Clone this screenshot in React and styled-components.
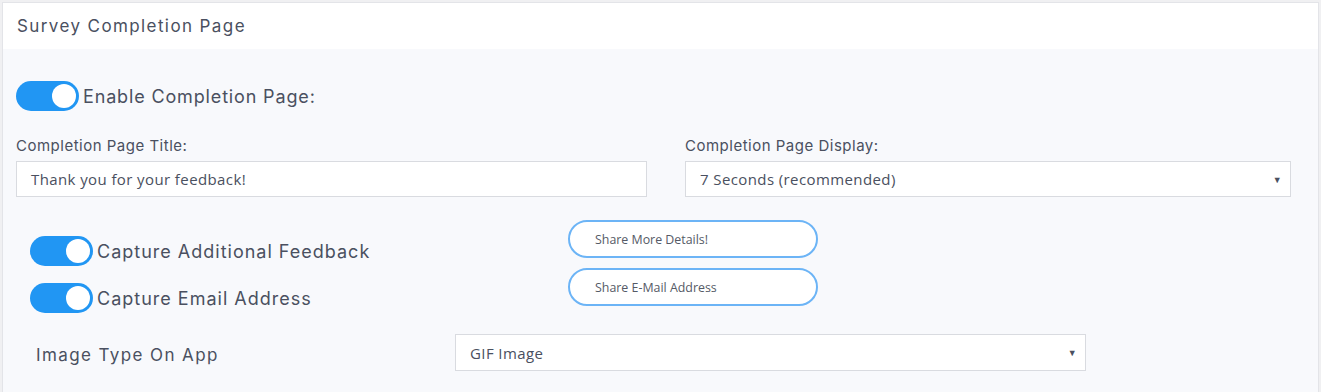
import styled, { createGlobalStyle } from "styled-components";

const GlobalStyle = createGlobalStyle`
  body {
    margin: 0;
    background: #f0f0f2;
    font-family: "Open Sans", "Liberation Sans", sans-serif;
  }
`;

const Card = styled.div`
  margin: 2px 2px 0 2px;
  width: 1315px;
  border: 1px solid #e3e4e8;
  background: #f8f9fc;
  height: 400px;
`;

const Header = styled.div`
  background: #ffffff;
  height: 46px;
  padding-left: 14px;
  display: flex;
  align-items: center;
  font-family: "Inter", sans-serif;
  font-size: 17px;
  letter-spacing: 1.4px;
  color: #4a5060;
`;

const Body = styled.div`
  padding: 32px 27px 0 13px;
`;

const ToggleRow = styled.label`
  display: flex;
  align-items: center;
  gap: 4px;
  font-family: "Inter", sans-serif;
  font-size: 18px;
  letter-spacing: ${(p) => p.spacing || 0.9}px;
  color: #4a5060;
  margin-left: ${(p) => p.indent || 0}px;
`;

const Switch = styled.span`
  width: 63px;
  height: 30px;
  border-radius: 15px;
  background: #2196f3;
  display: flex;
  align-items: center;
  justify-content: flex-end;
  padding-right: 3px;
  box-sizing: border-box;
  flex-shrink: 0;
  &::after {
    content: "";
    width: 24px;
    height: 24px;
    border-radius: 50%;
    background: #fff;
  }
`;

const Grid = styled.div`
  display: grid;
  grid-template-columns: 631px 606px;
  column-gap: 38px;
  margin-top: 25px;
`;

const Field = styled.div`
  display: flex;
  flex-direction: column;
`;

const Label = styled.div`
  font-family: "Inter", sans-serif;
  font-size: 15px;
  letter-spacing: 0.5px;
  color: #4a5060;
  margin-bottom: 8px;
  height: 17px;
`;

const Box = styled.div`
  height: ${(p) => p.h || 36}px;
  border: 1px solid #d9dbe0;
  background: #fff;
  display: flex;
  align-items: center;
  justify-content: space-between;
  padding: 0 8px 0 14px;
  font-size: 15px;
  letter-spacing: 0.4px;
  color: #4a5060;
  box-sizing: border-box;
  width: ${(p) => p.w || "auto"};
`;

const Arrow = styled.span`
  font-size: 9px;
  color: #4a5060;
`;

const CaptureSection = styled.div`
  display: flex;
  margin-top: 23px;
`;

const ToggleCol = styled.div`
  display: flex;
  flex-direction: column;
  gap: 17px;
  padding-top: 16px;
  width: 552px;
`;

const PillCol = styled.div`
  display: flex;
  flex-direction: column;
  gap: 10px;
`;

const Pill = styled.div`
  width: 250px;
  height: 38px;
  border: 2px solid #6cb4f6;
  border-radius: 19px;
  background: #fff;
  box-sizing: border-box;
  display: flex;
  align-items: center;
  padding-left: 25px;
  font-family: "Open Sans", sans-serif;
  font-size: 12.4px;
  color: #555a66;
`;

const ImageRow = styled.div`
  display: flex;
  align-items: center;
  margin-top: 21px;
  padding-left: 20px;
`;

const RowLabel = styled.div`
  width: 419px;
  padding-top: 5px;
  font-family: "Inter", sans-serif;
  font-size: 17px;
  letter-spacing: 1.4px;
  color: #4a5060;
`;

export default function App() {
  return (
    <>
      <GlobalStyle />
      <Card>
        <Header>Survey Completion Page</Header>
        <Body>
          <ToggleRow spacing={0.85}>
            <Switch />
            Enable Completion Page:
          </ToggleRow>
          <Grid>
            <Field>
              <Label>Completion Page Title:</Label>
              <Box>Thank you for your feedback!</Box>
            </Field>
            <Field>
              <Label>Completion Page Display:</Label>
              <Box>
                7 Seconds (recommended)
                <Arrow>▼</Arrow>
              </Box>
            </Field>
          </Grid>
          <CaptureSection>
            <ToggleCol>
              <ToggleRow indent={14} spacing={1}>
                <Switch />
                Capture Additional Feedback
              </ToggleRow>
              <ToggleRow indent={14} spacing={1}>
                <Switch />
                Capture Email Address
              </ToggleRow>
            </ToggleCol>
            <PillCol>
              <Pill>Share More Details!</Pill>
              <Pill>Share E-Mail Address</Pill>
            </PillCol>
          </CaptureSection>
          <ImageRow>
            <RowLabel>Image Type On App</RowLabel>
            <Box w="631px" h={37}>
              GIF Image
              <Arrow>▼</Arrow>
            </Box>
          </ImageRow>
        </Body>
      </Card>
    </>
  );
}
